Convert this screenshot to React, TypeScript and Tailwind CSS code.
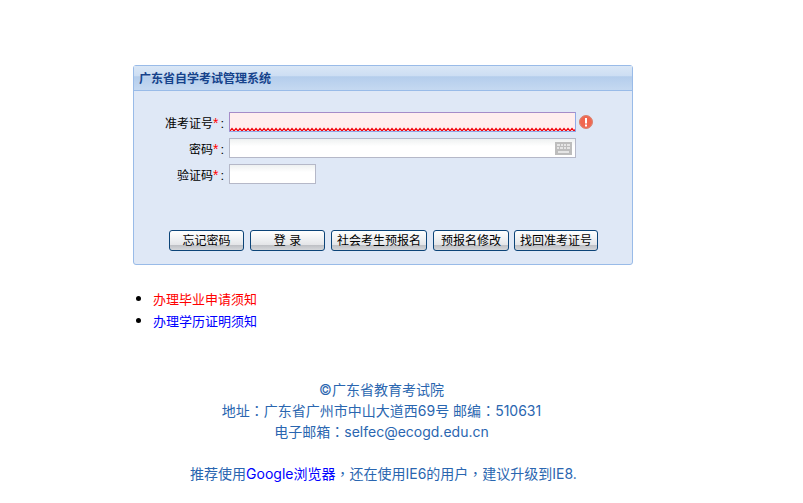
const FONT = "font-['Liberation_Sans','Noto_Sans_CJK_SC',sans-serif]";

function ErrorIcon() {
  return (
    <svg width="14" height="14" viewBox="0 0 14 14" className="ml-[3px] shrink-0">
      <circle cx="7" cy="7" r="6.5" fill="#ee6a55" stroke="#d9826f" />
      <circle cx="7" cy="7" r="4.8" fill="#f0664f" />
      <rect x="6" y="3" width="2" height="5.5" fill="#fff" />
      <rect x="6" y="9.5" width="2" height="2" fill="#fff" />
    </svg>
  );
}

function KeyboardIcon() {
  return (
    <svg width="17" height="13" viewBox="0 0 17 13" className="absolute right-[3px] top-[3px]">
      <rect width="17" height="13" fill="#bdbdbd" />
      <path d="M2 3h3M6 3h2M9 3h2M12 3h3M2 6h2M5 6h3M9 6h2M12 6h3M3 10h11" stroke="#f2f2f2" strokeWidth="1.4" />
    </svg>
  );
}

function Zigzag() {
  return (
    <svg className="absolute bottom-0 left-0 h-[4px] w-full">
      <defs>
        <pattern id="zig" width="4" height="4" patternUnits="userSpaceOnUse">
          <path d="M0 4L2 1.5L4 4" fill="none" stroke="#f00008" strokeWidth="1.2" />
        </pattern>
      </defs>
      <rect width="100%" height="4" fill="url(#zig)" />
    </svg>
  );
}

function Label({ text }: { text: string }) {
  return (
    <div className="w-[95px] pr-[5px] pt-[2px] text-right text-[12px] leading-[20px] text-black">
      {text}
      <span className="text-[14px] text-[#ff0000]">*</span>
      <span className="ml-[2px] text-[13px]">:</span>
    </div>
  );
}

function Btn({ text, width }: { text: string; width: string }) {
  return (
    <button
      className={
        "h-[21px] rounded-[3px] border border-[#0c4478] bg-[linear-gradient(#ffffff,#eef0f2_45%,#e4e5e8_72%,#bfc1c6_76%,#d5d7da)] p-0 text-[12px] leading-[18px] text-black " +
        width
      }
    >
      {text}
    </button>
  );
}

function Punct({ text }: { text: string }) {
  return <span className="font-['Noto_Sans_CJK_TC',sans-serif]">{text}</span>;
}

export default function App() {
  return (
    <div className={"h-[503px] w-[803px] overflow-hidden bg-white pt-[65px] " + FONT}>
      <div className="ml-[133px] h-[200px] w-[500px] rounded-[3px] border border-[#99bbe8] bg-[#dfe8f6]">
        <div className="h-[25px] border-b border-[#99bbe8] bg-[linear-gradient(#dae7f6,#cddef3_40%,#b4cdec_45%,#c5d9f1)] pl-[5px] text-[12px] font-bold leading-[26px] text-[#15428b]">
          广东省自学考试管理系统
        </div>
        <div className="flex flex-col pt-[21px]">
          <div className="flex h-[20px] items-center">
            <Label text="准考证号" />
            <div className="relative h-[20px] w-[347px] border border-[#a58cc8] border-r-[#8fa8e8] border-b-[#8fa8e8] bg-[#ffeeee]">
              <Zigzag />
            </div>
            <ErrorIcon />
          </div>
          <div className="mt-[6px] flex h-[20px] items-center">
            <Label text="密码" />
            <div className="relative h-[20px] w-[347px] border border-[#b5b8c8] bg-[linear-gradient(#eef1f1,#ffffff_40%)]">
              <KeyboardIcon />
            </div>
          </div>
          <div className="mt-[6px] flex h-[20px] items-center">
            <Label text="验证码" />
            <div className="h-[20px] w-[87px] border border-[#b5b8c8] bg-[linear-gradient(#eef1f1,#ffffff_40%)]" />
          </div>
          <div className="mt-[46px] flex gap-[6px] pl-[35px]">
            <Btn text="忘记密码" width="w-[75px]" />
            <Btn text="登 录" width="w-[75px]" />
            <Btn text="社会考生预报名" width="w-[96px]" />
            <Btn text="预报名修改" width="w-[76px]" />
            <Btn text="找回准考证号" width="w-[84px] -ml-px" />
          </div>
        </div>
      </div>

      <ul className="ml-[153px] mt-[23px] list-disc text-[13px] leading-[22px] marker:text-[17px]">
        <li className="h-[22px] text-[#ff0000] marker:text-black">办理毕业申请须知</li>
        <li className="h-[22px] text-[#0000ff] marker:text-black">办理学历证明须知</li>
      </ul>

      <div className="mt-[47px] w-[763px] text-center text-[14px] leading-[21px] text-[#2a66b0] font-['Inter','Noto_Sans_CJK_SC',sans-serif]">
        <p>©广东省教育考试院</p>
        <p>
          地址<Punct text="：" />广东省广州市中山大道西69号 邮编<Punct text="：" />510631
        </p>
        <p>
          电子邮箱<Punct text="：" />selfec@ecogd.edu.cn
        </p>
        <p className="mt-[21px] pl-[4px]">
          推荐使用<a className="text-[#0000ff]">Google浏览器</a>
          <Punct text="，" />还在使用IE6的用户<Punct text="，" />建议升级到IE8.
        </p>
      </div>
    </div>
  );
}
